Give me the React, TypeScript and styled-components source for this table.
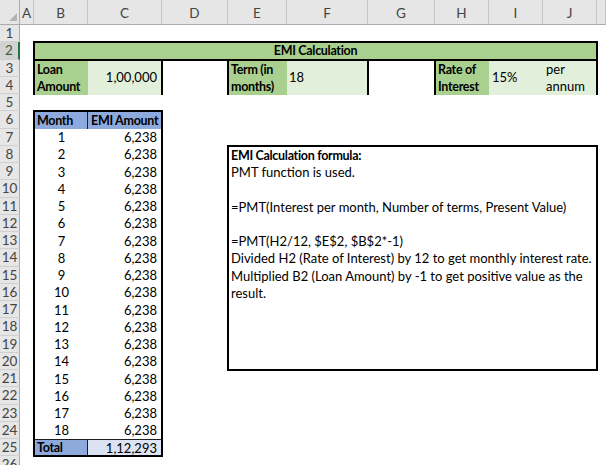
import React from "react";
import styled, { createGlobalStyle } from "styled-components";

const ROW_H = 17.25;

const GlobalStyle = createGlobalStyle`
  html, body { margin: 0; padding: 0; background: #ffffff; }
  body { overflow: hidden; }
`;

const Sheet = styled.div`
  display: grid;
  grid-template-columns: 20px 14px 54px 74px 66px 59px 81px 67px 54px 54px 54px minmax(0, 1fr);
  grid-template-rows: 25px repeat(26, ${ROW_H}px);
  width: 606px;
  height: 465px;
  overflow: hidden;
  background: #ffffff;
  font-family: Lato, "Liberation Sans", sans-serif;
  font-size: 13px;
  color: #000;
  & > * { min-width: 0; }
`;

const Bold = `
  font-weight: 700;
  font-size: 12.5px;
  letter-spacing: -0.3px;
`;

const Corner = styled.div`
  grid-column: 1;
  grid-row: 1;
  background: #e6e6e6;
  border-right: 1px solid #ababab;
  border-bottom: 1px solid #ababab;
  display: flex;
  align-items: flex-end;
  justify-content: flex-end;
  padding: 0 2px 3px 0;
`;

const ColHead = styled.div`
  grid-row: 1;
  background: #e6e6e6;
  border-right: 1px solid #c6c6c6;
  border-bottom: 1px solid #ababab;
  display: flex;
  align-items: center;
  justify-content: center;
  color: #444;
  font-size: 13.5px;
  padding-top: 1px;
`;

const RowHead = styled.div<{ $selected?: boolean }>`
  grid-column: 1;
  background: ${(p) => (p.$selected ? "#d2d2d2" : "#e6e6e6")};
  border-bottom: 1px solid #d0d0d0;
  border-right: ${(p) => (p.$selected ? "2px solid #217346" : "1px solid #ababab")};
  display: flex;
  align-items: center;
  justify-content: center;
  color: ${(p) => (p.$selected ? "#3b5d46" : "#444")};
  font-size: 13.5px;
`;

const TitleBar = styled.div`
  grid-column: 3 / 12;
  grid-row: 3;
  margin: -1px;
  border: 2px solid #000;
  background: #a9d08e;
  ${Bold}
  display: flex;
  align-items: center;
  justify-content: center;
`;

const InputBox = styled.div<{ $col: string; $tracks: string }>`
  grid-column: ${(p) => p.$col};
  grid-row: 4 / 6;
  margin: -1px;
  border: 2px solid #000;
  display: grid;
  grid-template-columns: ${(p) => p.$tracks};
  & > * { min-width: 0; }
`;

const Label = styled.div`
  background: #a9d08e;
  ${Bold}
  padding: 0 2px;
  display: flex;
  align-items: center;
  line-height: ${ROW_H}px;
`;

const Value = styled.div<{ $right?: boolean; $pad?: number }>`
  background: #e2efda;
  display: flex;
  align-items: center;
  justify-content: ${(p) => (p.$right ? "flex-end" : "flex-start")};
  padding: 0 ${(p) => (p.$right ? 4 : 0)}px 0 ${(p) => p.$pad ?? 3}px;
  line-height: ${ROW_H}px;
`;

const CellText = styled.span`
  display: block;
  white-space: nowrap;
`;

const Table = styled.div`
  grid-column: 3 / 5;
  grid-row: 7 / 27;
  margin: -1px;
  border: 2px solid #000;
  display: grid;
  grid-template-columns: 53px minmax(0, 1fr);
  grid-template-rows: ${ROW_H - 1}px repeat(18, ${ROW_H}px) ${ROW_H - 1}px;
  & > * { min-width: 0; }
`;

const HeadCell = styled.div<{ $first?: boolean }>`
  background: #8ea9db;
  ${Bold}
  white-space: nowrap;
  display: flex;
  align-items: center;
  padding-left: ${(p) => (p.$first ? 2 : 3)}px;
  border-right: ${(p) => (p.$first ? "1px solid #1f1f1f" : "none")};
`;

const MonthCell = styled.div`
  display: flex;
  align-items: center;
  justify-content: center;
`;

const AmountCell = styled.div`
  display: flex;
  align-items: center;
  justify-content: flex-end;
  padding-right: 4px;
`;

const TotalLabel = styled.div`
  background: #8ea9db;
  ${Bold}
  display: flex;
  align-items: center;
  padding-left: 2px;
  border-top: 1px solid #1f1f1f;
  border-right: 1px solid #1f1f1f;
`;

const TotalValue = styled.div`
  background: linear-gradient(to right, #d9e1f2, #dfe6f4);
  display: flex;
  align-items: center;
  justify-content: flex-end;
  padding-right: 4px;
  border-top: 1px solid #1f1f1f;
`;

const FormulaBox = styled.div`
  grid-column: 6 / 12;
  grid-row: 9 / 22;
  margin: -1px;
  border: 2px solid #000;
  padding: 0 2px;
  display: flex;
  flex-direction: column;
  overflow: hidden;
`;

const Line = styled.div<{ $bold?: boolean }>`
  height: ${ROW_H}px;
  line-height: ${ROW_H}px;
  white-space: nowrap;
  ${(p) => (p.$bold ? Bold : "")}
`;

const COLS = ["A", "B", "C", "D", "E", "F", "G", "H", "I", "J", ""];

const formulaLines: { text: string; bold?: boolean }[] = [
  { text: "EMI Calculation formula:", bold: true },
  { text: "PMT function is used." },
  { text: "" },
  { text: "=PMT(Interest per month, Number of terms, Present Value)" },
  { text: "" },
  { text: "=PMT(H2/12, $E$2, $B$2*-1)" },
  { text: "Divided H2 (Rate of Interest) by 12 to get monthly interest rate." },
  { text: "Multiplied B2 (Loan Amount) by -1 to get positive value as the" },
  { text: "result." },
];

export default function App() {
  const months = Array.from({ length: 18 }, (_, i) => i + 1);
  return (
    <>
      <GlobalStyle />
      <Sheet>
        <Corner>
          <svg width="8" height="8" viewBox="0 0 8 8">
            <polygon points="8,0 8,8 0,8" fill="#b4b4b4" />
          </svg>
        </Corner>
        {COLS.map((c, i) => (
          <ColHead key={i} style={{ gridColumn: i + 2 }}>
            {c}
          </ColHead>
        ))}
        {Array.from({ length: 26 }, (_, i) => (
          <RowHead key={i} $selected={i === 1} style={{ gridRow: i + 2 }}>
            {i + 1}
          </RowHead>
        ))}

        <TitleBar>EMI Calculation</TitleBar>

        <InputBox $col="3 / 5" $tracks="53px minmax(0, 1fr)">
          <Label>
            <CellText>
              Loan
              <br />
              Amount
            </CellText>
          </Label>
          <Value $right>
            <CellText>1,00,000</CellText>
          </Value>
        </InputBox>

        <InputBox $col="6 / 8" $tracks="58px minmax(0, 1fr)">
          <Label>
            <CellText>
              Term (in
              <br />
              months)
            </CellText>
          </Label>
          <Value $pad={2}>
            <CellText>18</CellText>
          </Value>
        </InputBox>

        <InputBox $col="9 / 12" $tracks="53px 54px minmax(0, 1fr)">
          <Label>
            <CellText>
              Rate of
              <br />
              Interest
            </CellText>
          </Label>
          <Value>
            <CellText>15%</CellText>
          </Value>
          <Value>
            <CellText>
              per
              <br />
              annum
            </CellText>
          </Value>
        </InputBox>

        <Table>
          <HeadCell $first>Month</HeadCell>
          <HeadCell>EMI Amount</HeadCell>
          {months.map((m) => (
            <React.Fragment key={m}>
              <MonthCell>{m}</MonthCell>
              <AmountCell>6,238</AmountCell>
            </React.Fragment>
          ))}
          <TotalLabel>Total</TotalLabel>
          <TotalValue>1,12,293</TotalValue>
        </Table>

        <FormulaBox>
          {formulaLines.map((l, i) => (
            <Line key={i} $bold={l.bold}>
              {l.text}
            </Line>
          ))}
        </FormulaBox>
      </Sheet>
    </>
  );
}
